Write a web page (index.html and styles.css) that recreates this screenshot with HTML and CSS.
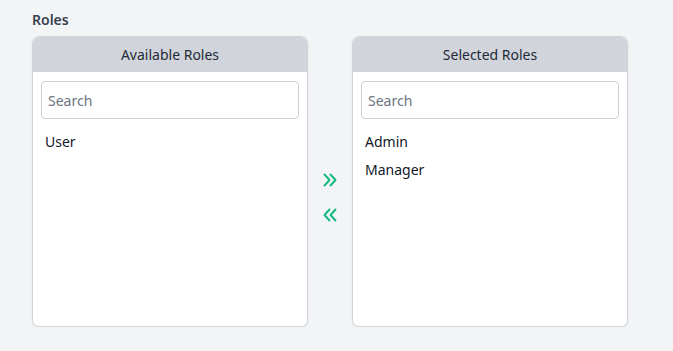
FILE: index.html
```html
<!DOCTYPE html>
<html lang="en">
<head>
    <meta charset="UTF-8">
    <meta name="viewport" content="width=device-width, initial-scale=1.0">
    <title>Roles</title>
    <link rel="stylesheet" href="styles.css">
</head>
<body>
    <div class="roles-field">
        <label class="field-label">Roles</label>
        <div class="picker">
            <div class="panel">
                <div class="panel-header">Available Roles</div>
                <div class="panel-body">
                    <input type="text" class="search" placeholder="Search">
                    <ul class="role-list">
                        <li>User</li>
                    </ul>
                </div>
            </div>

            <div class="transfer">
                <button class="move-btn" title="Add">
                    <svg width="16" height="16" viewBox="0 0 16 16" fill="none" stroke="currentColor" stroke-width="1.9" stroke-linecap="round" stroke-linejoin="round">
                        <polyline points="2.5,2.5 7.5,8 2.5,13.5"/>
                        <polyline points="8.5,2.5 13.5,8 8.5,13.5"/>
                    </svg>
                </button>
                <button class="move-btn" title="Remove">
                    <svg width="16" height="16" viewBox="0 0 16 16" fill="none" stroke="currentColor" stroke-width="1.9" stroke-linecap="round" stroke-linejoin="round">
                        <polyline points="7.5,2.5 2.5,8 7.5,13.5"/>
                        <polyline points="13.5,2.5 8.5,8 13.5,13.5"/>
                    </svg>
                </button>
            </div>

            <div class="panel">
                <div class="panel-header">Selected Roles</div>
                <div class="panel-body">
                    <input type="text" class="search" placeholder="Search">
                    <ul class="role-list">
                        <li>Admin</li>
                        <li>Manager</li>
                    </ul>
                </div>
            </div>
        </div>
    </div>
</body>
</html>
```

FILE: styles.css
```css
body {
    margin: 0;
    font-family: 'Noto Sans', 'Open Sans', sans-serif;
    background: #f3f4f6;
    color: #1f2937;
    -webkit-font-smoothing: antialiased;
}
.roles-field {
    padding: 11px 32px 0;
}
.field-label {
    display: block;
    font-size: 14px;
    font-weight: 600;
    color: #374151;
    line-height: 18px;
    margin-bottom: 7px;
}
.picker {
    display: flex;
    align-items: stretch;
}
.panel {
    width: 276px;
    height: 291px;
    box-sizing: border-box;
    background: #fff;
    border: 1px solid #d1d5db;
    border-radius: 7px;
    box-shadow: 0 1px 2px rgba(0,0,0,0.08);
    overflow: hidden;
    display: flex;
    flex-direction: column;
}
.panel-header {
    background: #d1d5db;
    height: 36px;
    line-height: 38px;
    text-align: center;
    font-size: 14px;
    color: #1f2937;
    margin: -1px -1px 0;
}
.panel-body {
    padding: 9px 8px 8px;
}
.search {
    display: block;
    width: 100%;
    height: 38px;
    box-sizing: border-box;
    border: 1px solid #ccd0d5;
    border-radius: 4px;
    padding: 0 6px;
    font-family: inherit;
    font-size: 14px;
    color: #1f2937;
    outline: none;
}
.search::placeholder {
    color: #6b7280;
}
.role-list {
    list-style: none;
    margin: 9px 0 0;
    padding: 0;
}
.role-list li {
    padding: 0 4px;
    line-height: 28px;
    font-size: 14px;
    color: #111827;
}
.transfer {
    width: 44px;
    display: flex;
    flex-direction: column;
    align-items: center;
    justify-content: center;
    gap: 19px;
    padding-top: 32px;
    box-sizing: border-box;
}
.move-btn {
    display: block;
    padding: 0;
    border: 0;
    background: none;
    color: #10b981;
    cursor: pointer;
    line-height: 0;
}
```
